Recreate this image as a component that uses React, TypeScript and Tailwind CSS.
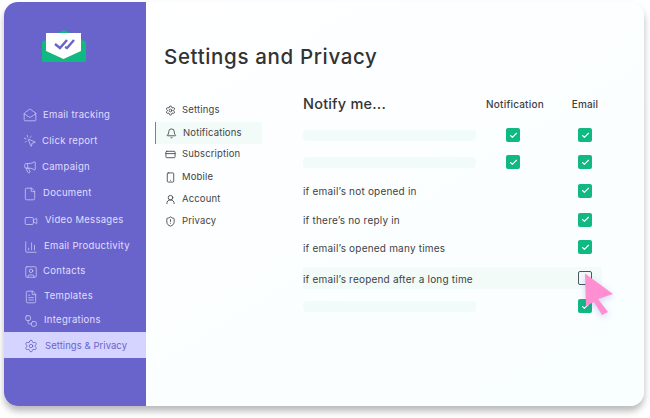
import {
  Bell,
  ChartColumn,
  Check,
  CreditCard,
  File,
  FileText,
  MailOpen,
  Megaphone,
  MousePointerClick,
  Settings,
  ShieldAlert,
  Smartphone,
  SquareUser,
  UserRound,
  Video,
  Workflow,
} from "lucide-react";

const font = "font-['Inter','Liberation_Sans',sans-serif]";

const sideItems = [
  { label: "Email tracking", icon: MailOpen, cls: "h-[26px] pl-[19px] gap-[6px]" },
  { label: "Click report", icon: MousePointerClick, cls: "h-[26px] pl-[19px] gap-[5px]" },
  { label: "Campaign", icon: Megaphone, cls: "h-[26px] pl-[19px] gap-[5px]" },
  { label: "Document", icon: File, cls: "h-[27px] pl-[19px] gap-[6px]" },
  { label: "Video Messages", icon: Video, cls: "h-[27px] pl-[20px] gap-[7px]" },
  { label: "Email Productivity", icon: ChartColumn, cls: "h-[25px] pl-[20px] gap-[6px]" },
  { label: "Contacts", icon: SquareUser, cls: "h-[25px] pl-[20px] gap-[5px]" },
  { label: "Templates", icon: FileText, cls: "h-[25px] pl-[20px] gap-[6px]" },
  { label: "Integrations", icon: Workflow, cls: "h-[23px] pl-[20px] gap-[6px]" },
];

const subItems = [
  { label: "Settings", icon: Settings, cls: "h-[22px] pb-[2px]" },
  { label: "Notifications", icon: Bell, cls: "h-[22px] border-l-[1.5px] border-[#10b981] bg-[#f2fbf8] text-[#10b981]" },
  { label: "Subscription", icon: CreditCard, cls: "h-[22px] pb-[2px]" },
  { label: "Mobile", icon: Smartphone, cls: "h-[22px]" },
  { label: "Account", icon: UserRound, cls: "h-[22px]" },
  { label: "Privacy", icon: ShieldAlert, cls: "h-[22px]" },
];

function Box({ on = true }: { on?: boolean }) {
  if (!on) {
    return <div className="size-[14px] rounded-[2px] border border-[#4b5563]" />;
  }
  return (
    <div className="flex size-[14px] items-center justify-center rounded-[2px] bg-[#10b981]">
      <Check size={9} strokeWidth={3} className="text-white" />
    </div>
  );
}

function Row({
  cls,
  label,
  notify = false,
  active = false,
}: {
  cls: string;
  label?: string;
  notify?: boolean;
  active?: boolean;
}) {
  return (
    <div className={`flex items-center ${cls}`}>
      <div className={`flex h-full w-[177px] shrink-0 items-center ${active ? "bg-[#f2fbf8]" : ""}`}>
        {label ? (
          <span className="whitespace-nowrap pt-[2px] text-[10px] tracking-[0.2px] text-[#3f3f46]">{label}</span>
        ) : (
          <div className="h-[11px] w-[173px] rounded-[4px] bg-[#f1fbfa]" />
        )}
      </div>
      <div className={`flex h-full w-[70px] shrink-0 items-center pl-[26px] ${active ? "bg-[#f2fbf8]" : ""}`}>
        {notify && <Box />}
      </div>
      <div className={`flex h-full items-center pl-[28px] ${active ? "w-[52px] bg-[#f2fbf8]" : "w-[70px]"}`}>
        <Box on={!active} />
      </div>
    </div>
  );
}

export default function App() {
  return (
    <div className={`${font} h-[418px] w-[650px] overflow-hidden bg-white pb-[12px] pl-[4px] pr-[6px] pt-[2px]`}>
      <div className="relative flex h-[404px] w-[640px] rounded-[14px] bg-gradient-to-br from-white to-[#f9feff] shadow-[0_5px_7px_rgba(0,0,0,0.28)]">
        <aside className="flex w-[142px] shrink-0 flex-col rounded-l-[14px] bg-[#6964cc]">
          <div className="flex h-[100px] shrink-0 pl-[38px] pt-[26px]">
            <svg width="44" height="35" viewBox="0 0 44 35">
              <path d="M0 14 L22 2 L44 14 V34 H0 Z" fill="#10b981" />
              <path d="M4 5 H39 V23 L21.5 31 L4 23 Z" fill="#fff" />
              <path d="M13 16 L18 20 L25 12 M23 19 L25 20 L32 12" fill="none" stroke="#6964cc" strokeWidth="2.4" />
            </svg>
          </div>
          <nav className="flex flex-col">
            {sideItems.map((item) => (
              <div key={item.label} className={`flex shrink-0 items-center text-[9.5px] tracking-[0.3px] text-[#e0deff] ${item.cls}`}>
                <item.icon size={14} strokeWidth={1.1} className="shrink-0" />
                <span>{item.label}</span>
              </div>
            ))}
            <div className="flex h-[26px] items-center gap-[7px] bg-[#d5d3ff] pl-[20px] pt-[2px] text-[9.5px] tracking-[0.05px] text-[#6964cc]">
              <Settings size={14} strokeWidth={1.2} className="shrink-0 text-[#5551b8]" />
              <span>Settings &amp; Privacy</span>
            </div>
          </nav>
        </aside>
        <main className="flex-1 pl-[9px]">
          <h1 className="pl-[9px] pt-[43px] text-[20.5px] font-medium leading-[24px] tracking-[0.65px] text-[#333333]">
            Settings and Privacy
          </h1>
          <div className="flex pt-[25px]">
            <nav className="mt-[6px] flex w-[107px] shrink-0 flex-col">
              {subItems.map((item) => (
                <div key={item.label} className={`flex items-center gap-[6px] pl-[10px] text-[9.5px] tracking-[0.15px] text-[#444444] ${item.cls}`}>
                  <item.icon size={11} strokeWidth={1.9} className="shrink-0" />
                  <span>{item.label}</span>
                </div>
              ))}
            </nav>
            <section className="ml-[41px] w-[317px]">
              <div className="flex h-[20px] items-center">
                <h2 className="w-[177px] text-[14.5px] font-medium tracking-[0.2px] text-[#333333]">Notify me...</h2>
                <span className="w-[70px] text-center text-[10px] font-medium tracking-[0.2px] text-[#3f3f46]">Notification</span>
                <span className="w-[70px] text-center text-[10px] font-medium tracking-[0.2px] text-[#3f3f46]">Email</span>
              </div>
              <Row cls="mt-[7px] h-[28px]" notify />
              <Row cls="h-[26px]" notify />
              <Row cls="mt-[1px] h-[29px]" label="if email’s not opened in" />
              <Row cls="h-[29px]" label="if there’s no reply in" />
              <Row cls="h-[26px]" label="if email’s opened many times" />
              <Row cls="mt-[7px] h-[22px] rounded-[3px]" label="if email’s reopend after a long time" active />
              <Row cls="mt-[3px] h-[28px]" />
            </section>
          </div>
        </main>
        <svg className="absolute left-[578px] top-[268px] drop-shadow-[0_2px_3px_rgba(80,80,200,0.25)]" width="34" height="46" viewBox="0 0 34 46">
          <path d="M3 3.5 L31 24 L16 29 L26 42 L20 45 L12 32 L4 36 Z" fill="#ff8fd0" />
        </svg>
      </div>
    </div>
  );
}
